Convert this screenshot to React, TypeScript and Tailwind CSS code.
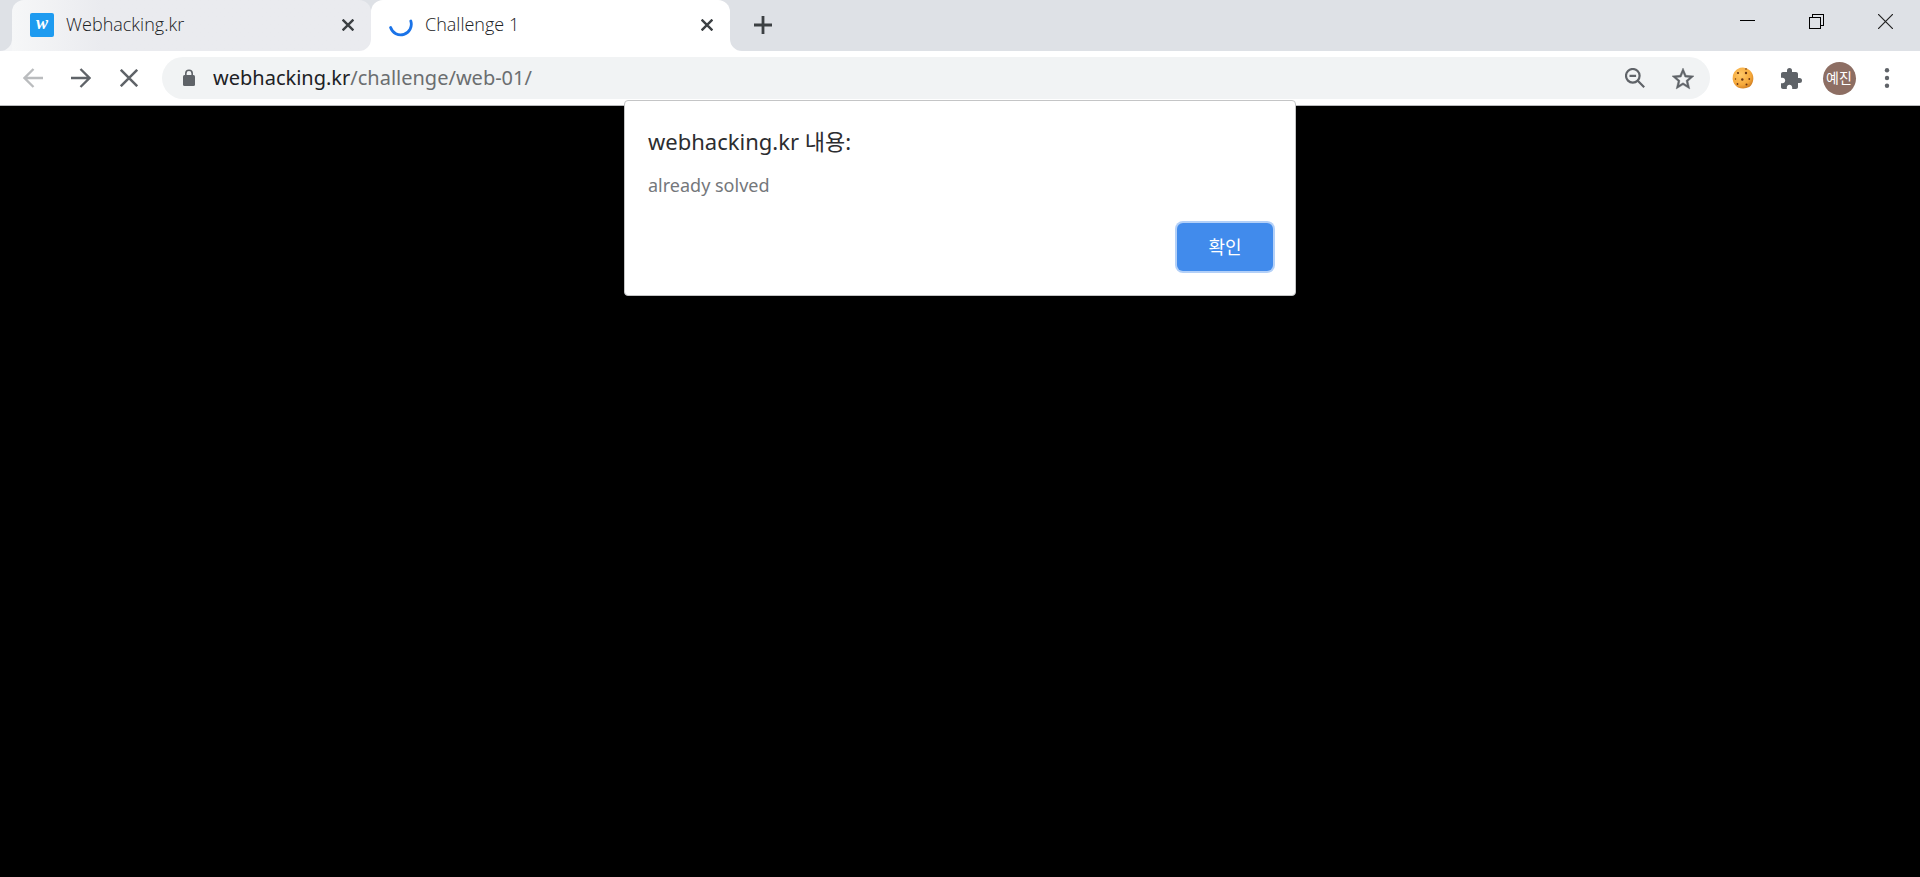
import type { ReactNode } from "react";

const CloseIcon = () => (
  <svg viewBox="0 0 12 12" className="w-3 h-3" fill="none" stroke="#3c4043" strokeWidth="2.4">
    <path d="M.6.6l10.800 10.800M11.400.6L.6 11.400" />
  </svg>
);

// small outward curve at the foot of a tab
const TabFoot = ({ className }: { className: string }) => (
  <svg viewBox="0 0 12 12" className={`absolute bottom-0 w-3 h-3 ${className}`} fill="currentColor">
    <path d="M12 0v12H0A12 12 0 0 0 12 0z" />
  </svg>
);

const ToolButton = ({ label, children }: { label: string; children: ReactNode }) => (
  <button aria-label={label} className="w-12 h-12 shrink-0 flex items-center justify-center">
    {children}
  </button>
);

const TabStrip = () => (
  <div className="flex bg-[#dee1e6] h-[51px] pl-3 font-['Open_Sans',sans-serif]">
    <div className="relative flex items-center w-[359px] pl-[18px] pr-[17px] pb-px rounded-t-xl bg-linear-to-r from-[#f6f7f8] to-[#eaebef] to-25% text-[#dee1e6]">
      <svg viewBox="0 0 24 24" className="w-6 h-6 shrink-0">
        <rect width="24" height="24" rx="2" fill="#1e9bf0" />
        <text x="12" y="16" textAnchor="middle" fontSize="18" fontWeight="bold" fontStyle="italic" fontFamily="Liberation Serif, serif" fill="#fff">
          w
        </text>
      </svg>
      <span className="flex-1 pl-3 pb-0.5 text-lg font-light text-[#202124]">Webhacking.kr</span>
      <button aria-label="Close Webhacking.kr">
        <CloseIcon />
      </button>
      <span className="absolute bottom-0 -left-3 text-[#f4f5f7]">
        <TabFoot className="left-0" />
      </span>
    </div>
    <div className="relative flex items-center w-[359px] pl-[18px] pr-[17px] pb-px rounded-t-xl bg-white text-white">
      <TabFoot className="-left-3" />
      <TabFoot className="-right-3 -scale-x-100" />
      <svg viewBox="0 0 24 24" className="w-6 h-6 shrink-0" fill="none" stroke="#1a73e8" strokeWidth="2.8" strokeLinecap="round">
        <path d="M1.600 14.500A10.600 10.600 0 1 0 21.800 8" />
      </svg>
      <span className="flex-1 pl-3 pb-0.5 text-lg font-light text-[#202124]">Challenge 1</span>
      <button aria-label="Close Challenge 1">
        <CloseIcon />
      </button>
    </div>
    <button aria-label="New tab" className="px-6 pb-px">
      <svg viewBox="0 0 18 18" className="w-[18px] h-[18px]" fill="none" stroke="#3c4043" strokeWidth="2.8">
        <path d="M9 0v18M0 9h18" />
      </svg>
    </button>
    <div className="flex ml-auto h-[42px] text-black">
      <button aria-label="Minimize" className="w-[69px] flex items-center justify-center">
        <svg viewBox="0 0 15 15" className="w-[15px] h-[15px]" shapeRendering="crispEdges">
          <path d="M0 6h15v1H0z" />
        </svg>
      </button>
      <button aria-label="Restore" className="w-[69px] flex items-center justify-center">
        <svg viewBox="0 0 15 15" className="w-[15px] h-[15px]" fill="none" stroke="#000" shapeRendering="crispEdges">
          <path d="M.5 3.500h11v11H.5zM3.500 3V.5h11v11H12" />
        </svg>
      </button>
      <button aria-label="Close" className="w-[69px] flex items-center justify-center">
        <svg viewBox="0 0 15 15" className="w-[15px] h-[15px]" fill="none" stroke="#222" strokeWidth="1.200">
          <path d="M0 0l15 15M15 0L0 15" />
        </svg>
      </button>
    </div>
  </div>
);

const Toolbar = () => (
  <div className="flex items-center h-[55px] px-[9px] bg-white border-b border-[#b9babc]">
    <ToolButton label="Back">
      <svg viewBox="0 0 20 20" className="w-5 h-5" fill="none" stroke="#babcbe" strokeWidth="2.300">
        <path d="M20 10H2M10.500 1L1.500 10l9 9" />
      </svg>
    </ToolButton>
    <ToolButton label="Forward">
      <svg viewBox="0 0 20 20" className="w-5 h-5" fill="none" stroke="#5f6368" strokeWidth="2.300">
        <path d="M0 10h18M9.500 1l9 9-9 9" />
      </svg>
    </ToolButton>
    <ToolButton label="Stop">
      <svg viewBox="0 0 18 18" className="w-[18px] h-[18px]" fill="none" stroke="#5f6368" strokeWidth="2.500">
        <path d="M.8.8l16.400 16.400M17.200.8L.8 17.200" />
      </svg>
    </ToolButton>
    <div className="flex flex-1 items-center h-[42px] ml-[9px] mr-[9px] pl-5 pr-[3px] rounded-full bg-[#f1f3f4]">
      <svg viewBox="0 0 14 18" className="w-[14px] h-[18px] shrink-0">
        <rect x="1" y="6" width="12" height="11" rx="1.500" fill="#5f6368" />
        <path d="M3.800 7V4.500a3.200 3.200 0 0 1 6.400 0V7" fill="none" stroke="#5f6368" strokeWidth="1.600" />
      </svg>
      <a href="#" className="flex-1 pl-[17px] text-xl text-[#6b6e70]">
        <span className="text-[#202124]">webhacking.kr</span>/challenge/web-01/
      </a>
      <ToolButton label="Zoom">
        <svg viewBox="0 0 20 20" className="w-5 h-5" fill="none" stroke="#5f6368" strokeWidth="2.200">
          <circle cx="7.800" cy="7.800" r="6.800" />
          <path d="M4.500 7.800h6.600M12.800 12.800l6.400 6.400" />
        </svg>
      </ToolButton>
      <ToolButton label="Bookmark">
        <svg viewBox="2 2 20 19" className="w-[22px] h-[21px] overflow-visible" fill="#5f6368" stroke="#5f6368" strokeWidth=".4">
          <path d="M22 9.240l-7.190-.62L12 2 9.190 8.630 2 9.240l5.460 4.730L5.820 21 12 17.270 18.180 21l-1.630-7.030L22 9.240zM12 15.400l-3.760 2.270 1-4.280-3.320-2.880 4.380-.38L12 6.100l1.710 4.040 4.380.38-3.320 2.880 1 4.280L12 15.400z" />
        </svg>
      </ToolButton>
    </div>
    <ToolButton label="Cookies">
      <svg viewBox="0 0 22 22" className="w-[22px] h-[22px]">
        <defs>
          <radialGradient id="dough" cx=".4" cy=".35" r=".7">
            <stop offset="0" stopColor="#ffc867" />
            <stop offset=".7" stopColor="#f5a83a" />
            <stop offset="1" stopColor="#cf7d22" />
          </radialGradient>
        </defs>
        <path d="M8 .8Q14-.6 18 3.500q4 4 3.200 9.500-.6 4.500-4 7Q12 22.500 6 20.500 1.500 18 .7 12.500 0 4 8 .8z" fill="url(#dough)" />
        <g fill="#6b3410">
          <circle cx="14" cy="2" r=".8" />
          <circle cx="6" cy="6" r="1.100" />
          <circle cx="14" cy="6" r="1.200" />
          <circle cx="10.300" cy="12.500" r="1.200" />
          <circle cx="3.500" cy="12" r=".7" />
          <circle cx="17.300" cy="12" r=".9" />
          <circle cx="5.500" cy="17" r=".9" />
          <circle cx="14.500" cy="17.500" r="1" />
        </g>
      </svg>
    </ToolButton>
    <ToolButton label="Extensions">
      <svg viewBox="2 1 21 21" className="w-[21px] h-[21px]" fill="#5f6368">
        <path d="M20.500 11H19V7c0-1.100-.9-2-2-2h-4V3.500a2.500 2.500 0 0 0-5 0V5H4c-1.100 0-1.990.9-1.990 2v3.800H3.500c1.490 0 2.700 1.210 2.700 2.700s-1.210 2.700-2.700 2.700H2V20c0 1.100.9 2 2 2h3.800v-1.500c0-1.490 1.210-2.700 2.700-2.700s2.700 1.210 2.700 2.700V22H17c1.100 0 2-.9 2-2v-4h1.500a2.500 2.500 0 0 0 0-5z" />
      </svg>
    </ToolButton>
    <ToolButton label="Profile">
      <span className="w-[33px] h-[33px] flex items-center justify-center rounded-full bg-[#8d6e63] text-sm text-white">예진</span>
    </ToolButton>
    <ToolButton label="Menu">
      <svg viewBox="0 0 6 20" className="w-[6px] h-5" fill="#5f6368">
        <circle cx="3" cy="2.300" r="2.200" />
        <circle cx="3" cy="10" r="2.200" />
        <circle cx="3" cy="17.700" r="2.200" />
      </svg>
    </ToolButton>
  </div>
);

const AlertDialog = () => (
  <div
    role="alertdialog"
    aria-labelledby="alert-title"
    className="absolute top-[100px] left-1/2 -translate-x-1/2 w-[672px] pl-[23px] pr-[22px] pt-5 pb-6 flex flex-col rounded-sm border border-[#c4c5c6] bg-white"
  >
    <h1 id="alert-title" className="text-[22px] leading-10 text-[#2c2d30]">
      webhacking.kr 내용:
    </h1>
    <p className="pt-2 text-lg leading-8 text-[#74777b]">already solved</p>
    <button className="self-end w-24 h-12 mt-[22px] rounded-md bg-[#418bec] ring-2 ring-[#b3d0f8] text-lg text-white">확인</button>
  </div>
);

const App = () => {
  return (
    <div className="relative min-h-screen bg-black font-['Noto_Sans','Noto_Sans_CJK_KR',sans-serif]">
      <TabStrip />
      <Toolbar />
      <AlertDialog />
    </div>
  );
};

export default App;
